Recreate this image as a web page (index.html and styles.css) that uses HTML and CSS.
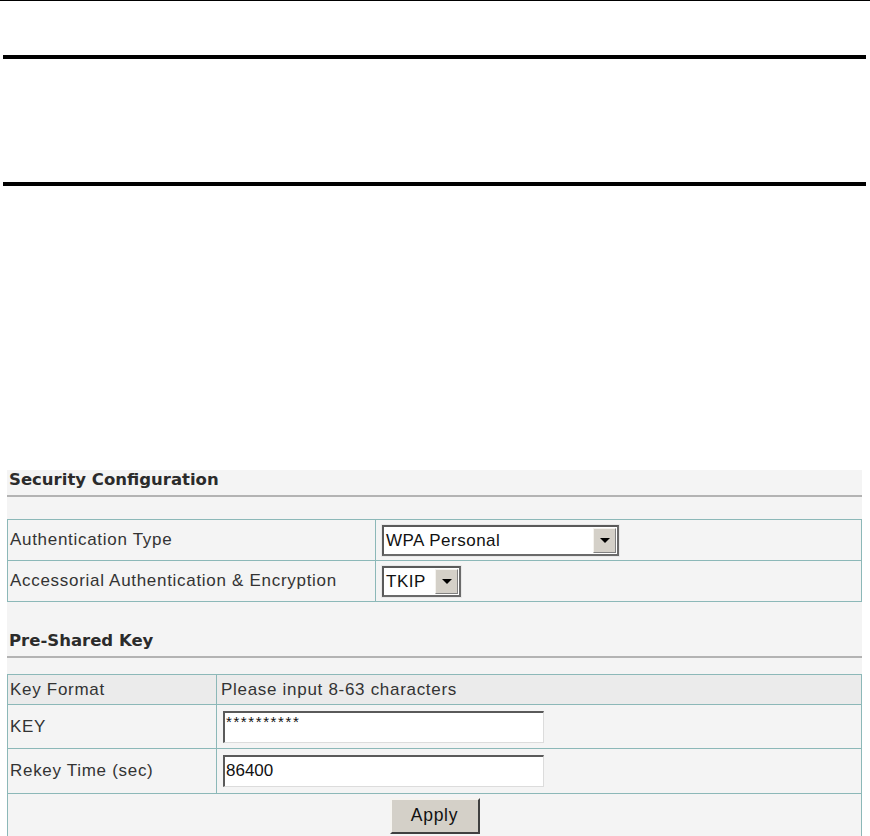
FILE: index.html
```html
<!DOCTYPE html>
<html lang="en">
<head>
<meta charset="utf-8">
<title>Security Configuration</title>
<link rel="stylesheet" href="styles.css">
</head>
<body>
<div class="topline"></div>
<div class="rule rule-first"></div>
<div class="rule rule-second"></div>

<div class="panel">
  <div class="sec-title">Security Configuration</div>
  <table class="cfg cfg-auth">
    <tr>
      <td class="label col-wide">Authentication Type</td>
      <td class="value">
        <div class="select select-wide"><span class="sel-text">WPA Personal</span><span class="sel-btn"><span class="tri"></span></span></div>
      </td>
    </tr>
    <tr>
      <td class="label col-wide">Accessorial Authentication &amp; Encryption</td>
      <td class="value">
        <div class="select select-narrow"><span class="sel-text">TKIP</span><span class="sel-btn"><span class="tri"></span></span></div>
      </td>
    </tr>
  </table>

  <div class="sec-title sec-title-2">Pre-Shared Key</div>
  <table class="cfg cfg-psk">
    <tr class="row-format">
      <td class="label col-narrow">Key Format</td>
      <td class="value value-text">Please input 8-63 characters</td>
    </tr>
    <tr class="row-key">
      <td class="label col-narrow">KEY</td>
      <td class="value"><div class="input input-key">**********</div></td>
    </tr>
    <tr class="row-rekey">
      <td class="label col-narrow">Rekey Time (sec)</td>
      <td class="value"><div class="input">86400</div></td>
    </tr>
    <tr class="row-apply">
      <td colspan="2" class="apply-cell"><button class="btn" type="button">Apply</button></td>
    </tr>
  </table>
</div>
</body>
</html>
```

FILE: styles.css
```css
html, body {
  margin: 0;
  padding: 0;
  background: #ffffff;
}

body {
  width: 870px;
  height: 836px;
  overflow: hidden;
  font-family: "Liberation Sans", Arial, sans-serif;
}

.topline {
  height: 1px;
  background: #000;
}

.rule {
  height: 4px;
  background: #000;
  margin-left: 3px;
  width: 863px;
}

.rule-first {
  margin-top: 54px;
}

.rule-second {
  margin-top: 123px;
}

.panel {
  margin: 284px 0 0 7px;
  width: 855px;
  height: 366px;
  background: #f4f4f4;
}

.sec-title {
  font-family: "DejaVu Sans", Verdana, sans-serif;
  font-weight: bold;
  font-size: 16.5px;
  color: #2b2b2b;
  height: 19px;
  line-height: 19px;
  padding-bottom: 6px;
  padding-left: 2px;
  border-bottom: 2px solid #b3b3b3;
}

.sec-title-2 {
  margin-top: 29px;
}

.cfg {
  width: 855px;
  border-collapse: collapse;
  table-layout: fixed;
}

.cfg td {
  border: 1px solid #8cb8b8;
  padding: 0;
  font-size: 17px;
  letter-spacing: 0.7px;
  color: #333;
  vertical-align: middle;
}

.cfg-auth {
  margin-top: 22px;
}

.cfg-auth tr {
  height: 41px;
}

.cfg-psk {
  margin-top: 16px;
}

.col-wide {
  width: 365px;
}

.col-narrow {
  width: 206px;
}

.label {
  padding-left: 2px !important;
}

.value {
  padding-left: 6px !important;
}

.value-text {
  padding-left: 4px !important;
}

.row-format {
  height: 30px;
}

.row-format td {
  background: #ebebeb;
}

.row-key {
  height: 44px;
}

.row-rekey {
  height: 45px;
}

.row-apply {
  height: 43px;
}

.select {
  display: flex;
  align-items: stretch;
  height: 31px;
  box-sizing: border-box;
  background: #fff;
  border-top: 2px solid #5a5a5a;
  border-left: 2px solid #5a5a5a;
  border-right: 2px solid #6a6a6a;
  border-bottom: 2px solid #6a6a6a;
  outline: 1px solid #e8e8e8;
}

.select-wide {
  width: 237px;
}

.select-narrow {
  width: 79px;
}

.sel-text {
  flex: 1;
  padding-left: 2px;
  line-height: 27px;
  color: #111;
  letter-spacing: 0.5px;
}

.sel-btn {
  width: 21px;
  margin: 1px;
  background: #d4d0c8;
  border-top: 1px solid #f4f2ee;
  border-left: 1px solid #f4f2ee;
  border-right: 1px solid #808080;
  border-bottom: 1px solid #808080;
  display: flex;
  align-items: center;
  justify-content: center;
}

.tri {
  width: 0;
  height: 0;
  border-left: 5px solid transparent;
  border-right: 5px solid transparent;
  border-top: 5px solid #000;
}

.input {
  width: 321px;
  height: 32px;
  box-sizing: border-box;
  background: #fff;
  border-top: 2px solid #5a5a5a;
  border-left: 2px solid #5a5a5a;
  border-right: 1px solid #dcdcdc;
  border-bottom: 1px solid #dcdcdc;
  line-height: 28px;
  padding-left: 1px;
  color: #111;
  letter-spacing: 0;
}

.input-key {
  font-size: 15px;
  line-height: 18px;
  letter-spacing: 1.6px;
}

.apply-cell {
  text-align: center;
}

.btn {
  width: 90px;
  height: 36px;
  background: #d4d0c8;
  border-top: 2px solid #f6f4f0;
  border-left: 2px solid #f6f4f0;
  border-right: 2px solid #404040;
  border-bottom: 2px solid #404040;
  font-family: "Liberation Sans", Arial, sans-serif;
  font-size: 17.5px;
  letter-spacing: 0.7px;
  color: #111;
  padding: 0;
  margin-top: 1px;
}
```
